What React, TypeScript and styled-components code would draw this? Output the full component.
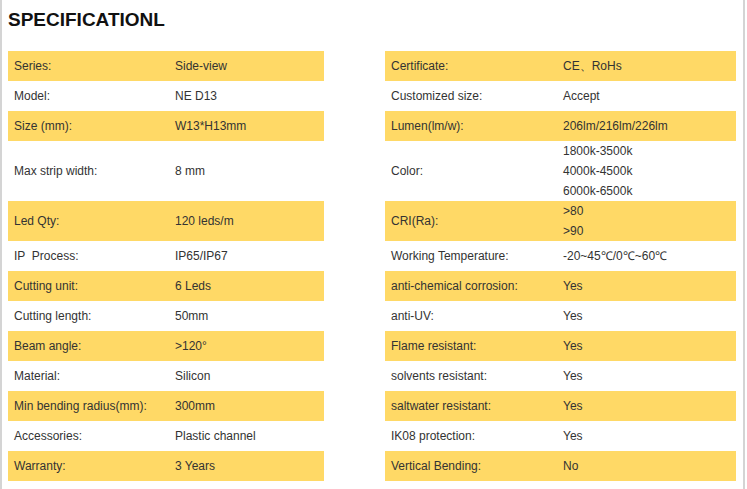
import React from "react";
import styled, { createGlobalStyle } from "styled-components";

const GlobalStyle = createGlobalStyle`
  html, body { margin: 0; padding: 0; background: #fff; }
  body { font-family: "Liberation Sans", Arial, sans-serif; }
`;

const Page = styled.div`
  box-sizing: border-box;
  width: 745px;
  min-height: 489px;
  border-left: 2px solid #d4d4d4;
  border-right: 2px solid #d4d4d4;
  padding: 9px 0 0 6px;
`;

const Title = styled.h1`
  margin: 0 0 20px 0;
  font-size: 19px;
  line-height: 22px;
  font-weight: bold;
  color: #111;
`;

const Table = styled.div`
  display: grid;
  grid-template-columns: 161px 155px 61px 172px 179px;
`;

const Cell = styled.div<{ $band: boolean }>`
  display: flex;
  flex-direction: column;
  justify-content: center;
  min-height: 30px;
  padding-left: 6px;
  background: ${(p) => (p.$band ? "#ffd966" : "#fff")};
  font-size: 12px;
  line-height: 20px;
  color: #333;
  white-space: nowrap;
`;

const Gap = styled.div``;

type Row = { l1: string; v1: string[]; l2: string; v2: string[] };

const rows: Row[] = [
  { l1: "Series:", v1: ["Side-view"], l2: "Certificate:", v2: ["CE、RoHs"] },
  { l1: "Model:", v1: ["NE D13"], l2: "Customized size:", v2: ["Accept"] },
  { l1: "Size (mm):", v1: ["W13*H13mm"], l2: "Lumen(lm/w):", v2: ["206lm/216lm/226lm"] },
  {
    l1: "Max strip width:",
    v1: ["8 mm"],
    l2: "Color:",
    v2: ["1800k-3500k", "4000k-4500k", "6000k-6500k"],
  },
  { l1: "Led Qty:", v1: ["120 leds/m"], l2: "CRI(Ra):", v2: [">80", ">90"] },
  { l1: "IP  Process:", v1: ["IP65/IP67"], l2: "Working Temperature:", v2: ["-20~45℃/0℃~60℃"] },
  { l1: "Cutting unit:", v1: ["6 Leds"], l2: "anti-chemical corrosion:", v2: ["Yes"] },
  { l1: "Cutting length:", v1: ["50mm"], l2: "anti-UV:", v2: ["Yes"] },
  { l1: "Beam angle:", v1: [">120°"], l2: "Flame resistant:", v2: ["Yes"] },
  { l1: "Material:", v1: ["Silicon"], l2: "solvents resistant:", v2: ["Yes"] },
  { l1: "Min bending radius(mm):", v1: ["300mm"], l2: "saltwater resistant:", v2: ["Yes"] },
  { l1: "Accessories:", v1: ["Plastic channel"], l2: "IK08 protection:", v2: ["Yes"] },
  { l1: "Warranty:", v1: ["3 Years"], l2: "Vertical Bending:", v2: ["No"] },
];

const Lines = ({ items }: { items: string[] }) => (
  <>
    {items.map((t, i) => (
      <span key={i} style={{ whiteSpace: "pre" }}>
        {t}
      </span>
    ))}
  </>
);

export default function App() {
  return (
    <>
      <GlobalStyle />
      <Page>
        <Title>SPECIFICATIONL</Title>
        <Table>
          {rows.map((r, i) => {
            const band = i % 2 === 0;
            return (
              <React.Fragment key={i}>
                <Cell $band={band}>
                  <Lines items={[r.l1]} />
                </Cell>
                <Cell $band={band}>
                  <Lines items={r.v1} />
                </Cell>
                <Gap />
                <Cell $band={band}>
                  <Lines items={[r.l2]} />
                </Cell>
                <Cell $band={band}>
                  <Lines items={r.v2} />
                </Cell>
              </React.Fragment>
            );
          })}
        </Table>
      </Page>
    </>
  );
}
